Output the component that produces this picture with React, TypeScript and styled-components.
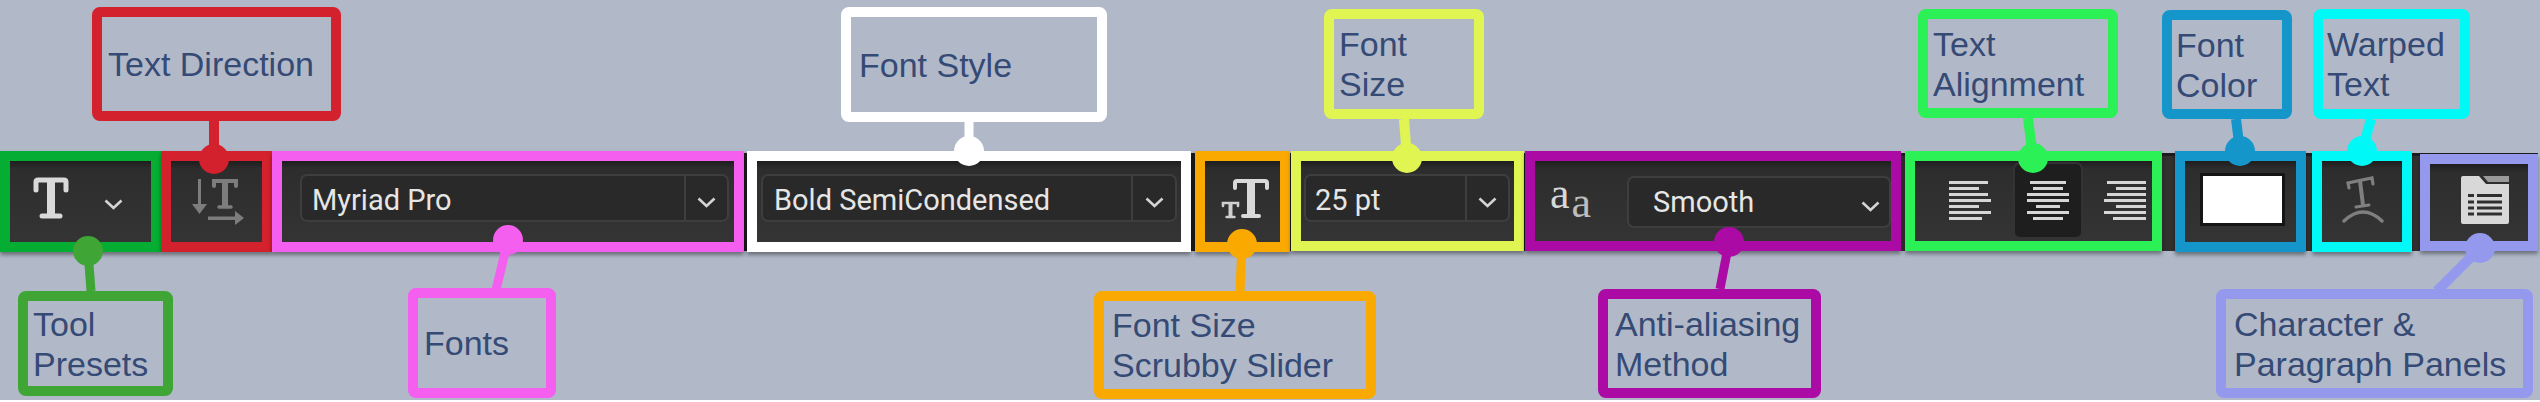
import styled, { createGlobalStyle } from 'styled-components'

const GlobalStyle = createGlobalStyle`
    html, body {
        margin: 0;
        background: #ffffff;
    }
    * {
        box-sizing: border-box;
    }
`

const Chevron: React.FC<{ ml?: number; mt?: number }> = ({ ml = 0, mt = 0 }) => (
    <Glyph $ml={ml} $mt={mt} width="19" height="11" viewBox="0 0 19 11">
        <polyline points="1.5,1.5 9.5,9 17.5,1.5" fill="none" stroke="#d4d4d4" strokeWidth="2.6" />
    </Glyph>
)

const SlabT: React.FC<{ ml: number; mt: number; w: number; h: number; color?: string }> = ({ ml, mt, w, h, color = '#d9d9d9' }) => (
    <Glyph $ml={ml} $mt={mt} width={w} height={h} viewBox="0 0 36 42">
        <path d="M3 13 V5 Q3 3 5 3 H31 Q33 3 33 5 V13" fill="none" stroke={color} strokeWidth="5" strokeLinecap="round" />
        <path d="M18 4 V38" stroke={color} strokeWidth="8" />
        <path d="M9 39 H27" stroke={color} strokeWidth="5" strokeLinecap="round" />
    </Glyph>
)

const DirectionIcon = () => (
    <Glyph $ml={19} $mt={16} width="55" height="48" viewBox="0 0 55 48">
        <g fill="#7d7d7d" stroke="none">
            <rect x="8" y="2" width="3" height="28" />
            <polygon points="2,27 17,27 9.5,37" />
            <rect x="18" y="39.5" width="29" height="3.5" />
            <polygon points="45,34 54,41 45,48" />
        </g>
        <path d="M24 9 V4 H46 V9" fill="none" stroke="#7d7d7d" strokeWidth="4" strokeLinecap="round" />
        <path d="M35 4 V29" stroke="#7d7d7d" strokeWidth="6" />
        <path d="M29 30 H41" stroke="#7d7d7d" strokeWidth="3.5" strokeLinecap="round" />
    </Glyph>
)

const ScrubbyIcon = () => (
    <Glyph $ml={16} $mt={18} width="48" height="40" viewBox="0 0 48 40">
        <path d="M14 9 V4 Q14 2 16 2 H44 Q46 2 46 4 V9" fill="none" stroke="#d9d9d9" strokeWidth="4" strokeLinecap="round" />
        <path d="M30 3 V36" stroke="#d9d9d9" strokeWidth="8" />
        <path d="M22 37 H38" stroke="#d9d9d9" strokeWidth="4" strokeLinecap="round" />
        <path d="M2 27 V24 H17 V27" fill="none" stroke="#cfcfcf" strokeWidth="2.6" strokeLinecap="round" />
        <path d="M9.5 24 V37" stroke="#cfcfcf" strokeWidth="4" />
        <path d="M5.5 38 H13.5" stroke="#cfcfcf" strokeWidth="2.4" strokeLinecap="round" />
    </Glyph>
)

const WarpIcon = () => (
    <Glyph $ml={20} $mt={14} width="42" height="48" viewBox="0 0 42 48">
        <g fill="none" stroke="#7f7f7f" strokeLinecap="round">
            <path d="M7 13 L6 8 L30 3 L31 9" strokeWidth="3.2" />
            <path d="M18 6 L21 30" strokeWidth="4" />
            <path d="M14 32 L27 30" strokeWidth="3" />
            <path d="M2 46 Q21 28 40 46" strokeWidth="3.4" />
        </g>
    </Glyph>
)

const PanelIcon = () => (
    <Glyph $ml={31} $mt={12} width="48" height="48" viewBox="0 0 48 48">
        <path d="M0 2 Q0 0 2 0 H18 L25 8 H48 V46 Q48 48 46 48 H2 Q0 48 0 46 Z" fill="#d8d8d8" />
        <path d="M22 0 H48 V6 H27 Z" fill="#999999" />
        <g fill="#2f2f2f">
            {[18, 24.5, 30.5, 36.5].map(y => (
                <g key={y}>
                    <rect x="7" y={y} width="6" height="3" />
                    <rect x="16" y={y} width="25" height="3" />
                </g>
            ))}
        </g>
    </Glyph>
)

const leftBars = [39, 30, 39, 42, 30, 42, 33]
const centerBars = [36, 30, 42, 42, 24, 42, 30]

const Leaders = () => {
    const items = [
        { c: '#d3212d', x1: 214, y1: 121, x2: 214, y2: 159, r: 15, w: 10 },
        { c: '#3fa535', x1: 91, y1: 291, x2: 88, y2: 251, r: 15, w: 9 },
        { c: '#f45ff0', x1: 496, y1: 290, x2: 508, y2: 240, r: 15, w: 9 },
        { c: '#ffffff', x1: 969, y1: 122, x2: 969, y2: 151, r: 15, w: 9 },
        { c: '#f9a900', x1: 1240, y1: 291, x2: 1242, y2: 244, r: 15, w: 9 },
        { c: '#e1f552', x1: 1404, y1: 119, x2: 1407, y2: 158, r: 15, w: 10 },
        { c: '#ac0aa5', x1: 1720, y1: 289, x2: 1729, y2: 242, r: 15, w: 9 },
        { c: '#2bf157', x1: 2028, y1: 118, x2: 2033, y2: 158, r: 15, w: 10 },
        { c: '#1496cb', x1: 2236, y1: 119, x2: 2240, y2: 151, r: 15, w: 10 },
        { c: '#00f9f6', x1: 2371, y1: 119, x2: 2362, y2: 151, r: 15, w: 10 },
        { c: '#9599ee', x1: 2437, y1: 291, x2: 2480, y2: 248, r: 15, w: 10 },
    ]
    return (
        <Overlay width="2540" height="400" viewBox="0 0 2540 400">
            {items.map(i => (
                <g key={i.c} fill={i.c} stroke={i.c}>
                    <line x1={i.x1} y1={i.y1} x2={i.x2} y2={i.y2} strokeWidth={i.w} />
                    <circle cx={i.x2} cy={i.y2} r={i.r} stroke="none" />
                </g>
            ))}
        </Overlay>
    )
}

const App = () => {
    return (
        <Page>
            <GlobalStyle />
            <TopRow>
                <Callout $color="#d3212d" $ml={92} $mt={7} $w={249} $h={114} $pad={6}>Text Direction</Callout>
                <Callout $color="#ffffff" $ml={500} $mt={7} $w={266} $h={115} $pad={8}>Font Style</Callout>
                <Callout $color="#e1f552" $ml={217} $mt={9} $w={160} $h={110} $pad={5}>Font<br />Size</Callout>
                <Callout $color="#2bf157" $ml={434} $mt={9} $w={200} $h={109} $pad={5}>Text<br />Alignment</Callout>
                <Callout $color="#1496cb" $ml={44} $mt={10} $w={130} $h={109} $pad={4}>Font<br />Color</Callout>
                <Callout $color="#00f9f6" $ml={21} $mt={9} $w={157} $h={110} $pad={4}>Warped<br />Text</Callout>
            </TopRow>

            <Toolbar>
                <Section $color="#05ae32" $w={161}>
                    <SlabT ml={23} mt={16} w={36} h={42} />
                    <Chevron ml={35} mt={38} />
                </Section>
                <Section $color="#d3212d" $w={111}>
                    <DirectionIcon />
                </Section>
                <Section $color="#f45ff0" $w={472}>
                    <Field $ml={18} $w={429}>
                        <FieldText $pad={10}>Myriad Pro</FieldText>
                        <Caret $w={43} $divider><Chevron /></Caret>
                    </Field>
                </Section>
                <Section $color="#ffffff" $w={444} $ml={3}>
                    <Field $ml={4} $w={416}>
                        <FieldText $pad={11}>Bold SemiCondensed</FieldText>
                        <Caret $w={44} $divider><Chevron /></Caret>
                    </Field>
                </Section>
                <Section $color="#f9a900" $w={95} $ml={4}>
                    <ScrubbyIcon />
                </Section>
                <Section $color="#e1f552" $w={233} $ml={1} $h={100}>
                    <Field $ml={3} $w={206}>
                        <FieldText $pad={9}>25 pt</FieldText>
                        <Caret $w={43} $divider><Chevron /></Caret>
                    </Field>
                </Section>
                <Section $color="#ac0aa5" $w={376} $ml={1} $h={100}>
                    <AaIcon>
                        <AaLetter>a</AaLetter>
                        <AaLetter $large>a</AaLetter>
                    </AaIcon>
                    <Field $ml={22} $w={264} $mt={15} $h={52}>
                        <FieldText $pad={24}>Smooth</FieldText>
                        <Caret $w={38}><Chevron /></Caret>
                    </Field>
                </Section>
                <Section $color="#2bf157" $w={257} $ml={4} $h={100}>
                    <AlignCell $w={98} $pad="0 0 0 32px" $align="flex-start">
                        {leftBars.map((w, i) => <AlignBar key={i} $w={w} />)}
                    </AlignCell>
                    <AlignCell $w={70} $active $align="center">
                        {centerBars.map((w, i) => <AlignBar key={i} $w={w} />)}
                    </AlignCell>
                    <AlignCell $w={69} $pad="0 4px 0 0" $align="flex-end">
                        {leftBars.map((w, i) => <AlignBar key={i} $w={w} />)}
                    </AlignCell>
                </Section>
                <Section $color="#1496cb" $w={131} $ml={13}>
                    <Swatch />
                </Section>
                <Section $color="#00f9f6" $w={100} $ml={6}>
                    <WarpIcon />
                </Section>
                <Section $color="#9599ee" $w={118} $ml={8} $top={1} $h={97}>
                    <PanelIcon />
                </Section>
            </Toolbar>

            <BottomRow>
                <Callout $color="#3fa535" $ml={18} $mt={40} $w={155} $h={105} $pad={5}>Tool<br />Presets</Callout>
                <Callout $color="#f45ff0" $ml={235} $mt={37} $w={148} $h={110} $pad={6}>Fonts</Callout>
                <Callout $color="#f9a900" $ml={538} $mt={40} $w={282} $h={108} $pad={8}>Font Size<br />Scrubby Slider</Callout>
                <Callout $color="#ac0aa5" $ml={222} $mt={38} $w={223} $h={109} $pad={7}>Anti-aliasing<br />Method</Callout>
                <Callout $color="#9599ee" $ml={395} $mt={38} $w={317} $h={109} $pad={8}>Character &amp;<br />Paragraph Panels</Callout>
            </BottomRow>

            <Leaders />
        </Page>
    )
}

const Page = styled.div`
    position: relative;
    width: 2540px;
    height: 400px;
    overflow: hidden;
    background: #b1b9c9;
    display: flex;
    flex-direction: column;
`
const TopRow = styled.div`
    display: flex;
    align-items: flex-start;
    height: 153px;
`
const BottomRow = styled.div`
    display: flex;
    align-items: flex-start;
    flex: 1;
`
const Callout = styled.div<{ $color: string; $ml: number; $mt: number; $w: number; $h: number; $pad: number }>`
    flex: none;
    display: block;
    align-content: center;
    margin-left: ${p => p.$ml}px;
    margin-top: ${p => p.$mt}px;
    width: ${p => p.$w}px;
    height: ${p => p.$h}px;
    padding-left: ${p => p.$pad}px;
    border: 10px solid ${p => p.$color};
    border-radius: 8px;
    color: #354a75;
    font-family: "Liberation Sans", Arial, sans-serif;
    font-size: 34px;
    line-height: 40px;
    white-space: nowrap;
`
const Toolbar = styled.div`
    display: flex;
    flex: none;
    height: 98px;
    width: 2538px;
    border-top: 3px solid #1c1c1c;
    background: linear-gradient(90deg, #1d1d1d 0, #1d1d1d 1900px, #333030 1900px);
`
const Section = styled.div<{ $color: string; $w: number; $ml?: number; $top?: number; $h?: number }>`
    flex: none;
    display: flex;
    align-items: flex-start;
    width: ${p => p.$w}px;
    height: ${p => p.$h ?? 101}px;
    margin-left: ${p => p.$ml ?? 0}px;
    margin-top: ${p => (p.$top ?? -2) - 3}px;
    border: 10px solid ${p => p.$color};
    background: linear-gradient(#1e1e1e 0, #2d2d2d 8px, #343434 100%);
    box-shadow: 0 3px 4px rgba(0, 0, 0, 0.4);
`
const Glyph = styled.svg<{ $ml: number; $mt: number }>`
    flex: none;
    display: block;
    margin-left: ${p => p.$ml}px;
    margin-top: ${p => p.$mt}px;
`
const Field = styled.div<{ $ml: number; $w: number; $mt?: number; $h?: number }>`
    flex: none;
    display: flex;
    margin-left: ${p => p.$ml}px;
    margin-top: ${p => p.$mt ?? 13}px;
    width: ${p => p.$w}px;
    height: ${p => p.$h ?? 48}px;
    background: #292929;
    border: 2px solid #3e3e3e;
    border-radius: 7px;
`
const FieldText = styled.div<{ $pad: number }>`
    flex: 1;
    padding-left: ${p => p.$pad}px;
    padding-top: 2px;
    color: #e6e6e6;
    font-family: Roboto, "Noto Sans", sans-serif;
    font-size: 29px;
    line-height: 44px;
    white-space: nowrap;
`
const Caret = styled.div<{ $w: number; $divider?: boolean }>`
    flex: none;
    display: flex;
    align-items: center;
    justify-content: center;
    width: ${p => p.$w}px;
    padding-top: 8px;
    border-left: ${p => (p.$divider ? '2px solid #3e3e3e' : 'none')};
`
const AaIcon = styled.div`
    flex: none;
    display: flex;
    margin-left: 15px;
    margin-top: 8px;
    width: 55px;
    font-family: "Liberation Serif", serif;
    font-size: 44px;
    line-height: 50px;
`
const AaLetter = styled.span<{ $large?: boolean }>`
    color: ${p => (p.$large ? '#bdbdbd' : '#d8d8d8')};
    margin-top: ${p => (p.$large ? 9 : 0)}px;
    margin-left: ${p => (p.$large ? 2 : 0)}px;
`
const AlignCell = styled.div<{ $w: number; $active?: boolean; $pad?: string; $align: string }>`
    flex: none;
    display: flex;
    flex-direction: column;
    align-items: ${p => p.$align};
    gap: 3px;
    width: ${p => p.$w}px;
    height: 77px;
    margin-top: 1px;
    padding: ${p => p.$pad ?? 0};
    padding-top: 17px;
    border: 2px solid ${p => (p.$active ? '#333333' : 'transparent')};
    border-radius: 7px;
    background: ${p => (p.$active ? '#1e1e1e' : 'transparent')};
`
const AlignBar = styled.span<{ $w: number }>`
    display: block;
    flex: none;
    width: ${p => p.$w}px;
    height: 3px;
    background: #d6d6d6;
`
const Swatch = styled.div`
    flex: none;
    margin-left: 15px;
    margin-top: 12px;
    width: 85px;
    height: 53px;
    background: #ffffff;
    border: 3px solid #151515;
`
const Overlay = styled.svg`
    position: absolute;
    left: 0;
    top: 0;
    pointer-events: none;
`

export default App
